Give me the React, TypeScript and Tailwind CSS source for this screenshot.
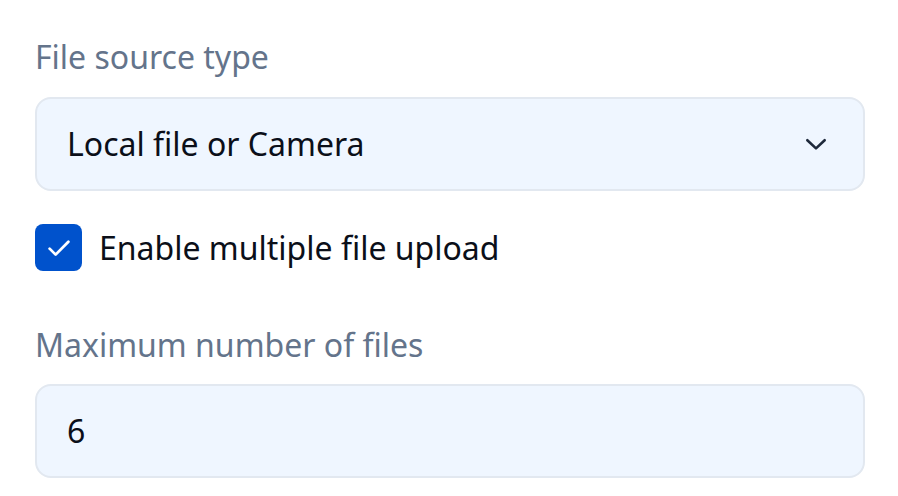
import React from 'react';

const font = { fontFamily: '"Noto Sans", "Open Sans", sans-serif' };

export default function App() {
  return (
    <div className="w-[898px] h-[496px] bg-white overflow-hidden" style={font}>
      <div className="flex flex-col pl-[35px] pr-[33px] pt-[37px]">
        {/* File source type */}
        <label className="text-[32px] leading-[40px] text-[#64748b]">File source type</label>
        <div className="mt-[20px] h-[94px] flex items-center justify-between rounded-[16px] border-2 border-[#e2e8f0] bg-[#eff6ff] pl-[30px] pr-[34px]">
          <span className="text-[32px] text-[#0b0f19]">Local file or Camera</span>
          <svg width="26" height="26" viewBox="0 0 24 24" fill="none" stroke="#1e293b" strokeWidth="2.4" strokeLinecap="round" strokeLinejoin="round">
            <path d="M4 8.5l8 7.5 8-7.5" />
          </svg>
        </div>

        {/* Multiple upload */}
        <div className="mt-[33px] h-[47px] flex items-center gap-[17px]">
          <div className="w-[47px] h-[47px] rounded-[8px] bg-[#0052cc] flex items-center justify-center">
            <svg width="30" height="30" viewBox="0 0 24 24" fill="none" stroke="white" strokeWidth="2.2" strokeLinecap="round" strokeLinejoin="round">
              <path d="M4.5 12.5l4.8 4.8L19.5 7" />
            </svg>
          </div>
          <span className="text-[32px] text-[#0b0f19]">Enable multiple file upload</span>
        </div>

        {/* Maximum number of files */}
        <label className="mt-[54px] text-[32px] leading-[40px] text-[#64748b]">Maximum number of files</label>
        <div className="mt-[19px] h-[94px] flex items-center rounded-[16px] border-2 border-[#e2e8f0] bg-[#eff6ff] pl-[30px]">
          <span className="text-[32px] text-[#0b0f19]">6</span>
        </div>
      </div>
    </div>
  );
}
